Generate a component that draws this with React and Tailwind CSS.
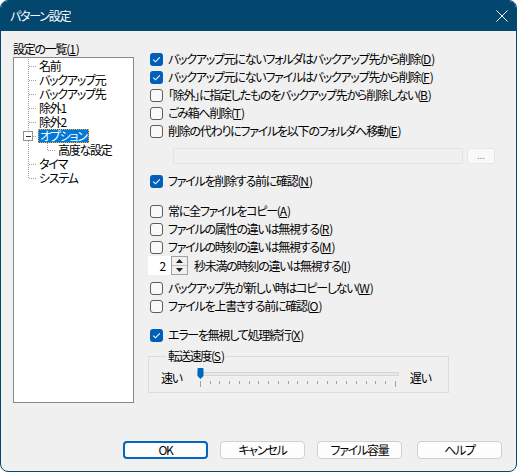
import React from "react";

const FONT = "font-['Yu_Gothic_UI','Noto_Sans_CJK_JP',sans-serif] [font-feature-settings:'palt'] tracking-[-1.25px]";

function U({ children }) {
  return <span className="underline underline-offset-[1px] tracking-normal">{children}</span>;
}

function Cb({ checked }) {
  if (checked) {
    return (
      <span className="w-[13px] h-[13px] shrink-0 rounded-[3px] bg-[#005fb8] flex items-center justify-center">
        <svg width="9" height="9" viewBox="0 0 9 9">
          <path d="M1.3 4.7 L3.5 6.8 L7.8 2.3" stroke="white" strokeWidth="1.1" fill="none" />
        </svg>
      </span>
    );
  }
  return <span className="w-[13px] h-[13px] shrink-0 rounded-[3px] border border-[#5d5d5d] bg-[#f9f9f9]" />;
}

function Row({ checked, children, h = "h-[18px]" }) {
  return (
    <div className={`flex items-center gap-[5px] pl-[2px] ${h}`}>
      <Cb checked={checked} />
      <span className="whitespace-nowrap">{children}</span>
    </div>
  );
}

function Gutter({ last, minus, child }) {
  const w = child ? 43 : 24;
  return (
    <svg width={w} height="14" className="shrink-0" shapeRendering="crispEdges">
      <line x1="14.5" y1={0} x2="14.5" y2={last ? 7 : 14} stroke="#a0a0a0" strokeDasharray="1 1" />
      {!child && <line x1="15" y1="7.5" x2="23" y2="7.5" stroke="#a0a0a0" strokeDasharray="1 1" />}
      {child && (
        <>
          <line x1="33.5" y1={0} x2="33.5" y2={7} stroke="#a0a0a0" strokeDasharray="1 1" />
          <line x1="34" y1="7.5" x2="42" y2="7.5" stroke="#a0a0a0" strokeDasharray="1 1" />
        </>
      )}
      {minus && (
        <>
          <rect x="9.5" y="2.5" width="9" height="9" fill="#ffffff" stroke="#919191" />
          <line x1="11.5" y1="7" x2="16.5" y2="7" stroke="#333" />
        </>
      )}
    </svg>
  );
}

function TreeItem({ label, last, minus, child, selected }) {
  return (
    <div className="flex items-center h-[14px]">
      <Gutter last={last} minus={minus} child={child} />
      {selected ? (
        <span className="h-[14px] leading-[12px] px-[1px] bg-[#0078d7] text-white border border-dotted border-[#f5a623] whitespace-nowrap">
          {label}
        </span>
      ) : (
        <span className="px-[1px] whitespace-nowrap">{label}</span>
      )}
    </div>
  );
}

function Btn({ children, primary }) {
  return (
    <div
      className={`w-[85px] h-[18px] rounded-[4px] bg-[#fdfdfd] flex items-center justify-center ${
        primary ? "border-2 border-[#0067c0]" : "border border-[#d0d0d0]"
      }`}
    >
      {children}
    </div>
  );
}

export default function App() {
  const ticks = Array.from({ length: 21 }, (_, i) => i);
  return (
    <div className={`w-[517px] h-[472px] bg-white ${FONT} text-[12px] leading-[14px] text-black`}>
      <div className="w-[517px] h-[472px] rounded-[8px] border border-[#03466e] bg-[#f0f0f0] overflow-hidden flex flex-col">
        {/* title */}
        <div className="h-[30px] bg-[#03466e] flex items-center justify-between pl-[9px] pr-[8px] text-white shrink-0">
          <span>パターン設定</span>
          <svg width="12" height="12" viewBox="0 0 12 12">
            <path d="M0.5 0.5 L11.5 11.5 M11.5 0.5 L0.5 11.5" stroke="white" strokeWidth="1" />
          </svg>
        </div>
        {/* body */}
        <div className="flex flex-1">
          {/* left */}
          <div className="pl-[12px] pt-[9px] w-[134px] shrink-0">
            <div className="h-[17px] flex items-center">
              設定の一覧(<U>1</U>)
            </div>
            <div className="w-[121px] h-[346px] bg-white border border-[#828790] pt-[1px]">
              <TreeItem label="名前" />
              <TreeItem label="バックアップ元" />
              <TreeItem label="バックアップ先" />
              <TreeItem label="除外1" />
              <TreeItem label="除外2" />
              <TreeItem label="オプション" minus selected />
              <TreeItem label="高度な設定" child />
              <TreeItem label="タイマ" />
              <TreeItem label="システム" last />
            </div>
          </div>
          {/* right */}
          <div className="flex flex-col pl-[13px] pt-[19px] flex-1">
            <Row checked>バックアップ元にないフォルダはバックアップ先から削除(<U>D</U>)</Row>
            <Row checked>バックアップ元にないファイルはバックアップ先から削除(<U>F</U>)</Row>
            <Row>「除外」に指定したものをバックアップ先から削除しない(<U>B</U>)</Row>
            <Row>ごみ箱へ削除(<U>T</U>)</Row>
            <Row>削除の代わりにファイルを以下のフォルダへ移動(<U>E</U>)</Row>
            <div className="flex items-center gap-[4px] pl-[25px] mt-[8px] h-[16px]">
              <div className="w-[290px] h-[16px] border border-[#e3e3e3] bg-[#f0f0f0]" />
              <div className="w-[28px] h-[16px] rounded-[3px] border border-[#e6e6e6] bg-[#f9f9f9] flex items-center justify-center text-[9px] text-[#888] leading-none pb-[2px] tracking-normal">
                ...
              </div>
            </div>
            <div className="mt-[8px]">
              <Row checked>ファイルを削除する前に確認(<U>N</U>)</Row>
            </div>
            <div className="mt-[12px]">
              <Row>常に全ファイルをコピー(<U>A</U>)</Row>
              <Row>ファイルの属性の違いは無視する(<U>R</U>)</Row>
              <Row>ファイルの時刻の違いは無視する(<U>M</U>)</Row>
            </div>
            <div className="flex items-center h-[19px] mt-[0px]">
              <div className="w-[40px] h-[19px] flex bg-white">
                <div className="w-[23px] flex items-center justify-end pr-[6px]">2</div>
                <div className="w-[17px] h-[19px] bg-[#f0f0f0] border border-[#a0a0a0] flex flex-col">
                  <div className="flex-1 flex items-center justify-center border-b border-[#c0c0c0]">
                    <svg width="7" height="4" viewBox="0 0 7 4"><path d="M0 4 L3.5 0 L7 4Z" fill="#222" /></svg>
                  </div>
                  <div className="flex-1 flex items-center justify-center">
                    <svg width="7" height="4" viewBox="0 0 7 4"><path d="M0 0 L3.5 4 L7 0Z" fill="#222" /></svg>
                  </div>
                </div>
              </div>
              <span className="ml-[6px] whitespace-nowrap">
                秒未満の時刻の違いは無視する(<U>I</U>)
              </span>
            </div>
            <div className="mt-[4px]">
              <Row>バックアップ先が新しい時はコピーしない(<U>W</U>)</Row>
              <Row>ファイルを上書きする前に確認(<U>O</U>)</Row>
            </div>
            <div className="mt-[11px]">
              <Row checked>エラーを無視して処理続行(<U>X</U>)</Row>
            </div>
            <fieldset className="w-[301px] h-[44px] border border-[#dcdcdc] mt-[5px] px-[12px]">
              <legend className="ml-[5px] px-[2px] leading-[14px]">
                転送速度(<U>S</U>)
              </legend>
              <div className="flex items-center h-[28px] pt-[2px]">
                <span className="whitespace-nowrap">速い</span>
                <div className="ml-[15px] w-[202px] h-[22px] flex flex-col">
                  <div className="h-[14px] flex items-center relative">
                    <div className="w-full h-[4px] bg-[#e7eaea] border border-[#d6d6d6]" />
                    <svg width="7" height="11" viewBox="0 0 7 11" className="absolute left-0 top-[1px]">
                      <path d="M0.5 1 Q0.5 0 1.5 0 L5.5 0 Q6.5 0 6.5 1 L6.5 8 L3.5 11 L0.5 8 Z" fill="#0067c0" />
                    </svg>
                  </div>
                  <div className="flex justify-between px-[3px]">
                    {ticks.map((i) => (
                      <div
                        key={i}
                        className={`w-[1px] bg-[#a0a0a0] ${i === 0 || i === 20 ? "h-[6px]" : "h-[3px]"}`}
                      />
                    ))}
                  </div>
                </div>
                <span className="ml-[11px] whitespace-nowrap">遅い</span>
              </div>
            </fieldset>
          </div>
        </div>
        {/* buttons */}
        <div className="flex justify-end pr-[14px] pb-[12px] items-center">
          <div className="flex gap-[12px]">
            <Btn primary>OK</Btn>
            <Btn>キャンセル</Btn>
            <Btn>ファイル容量</Btn>
          </div>
          <div className="ml-[15px]">
            <Btn>ヘルプ</Btn>
          </div>
        </div>
      </div>
    </div>
  );
}
